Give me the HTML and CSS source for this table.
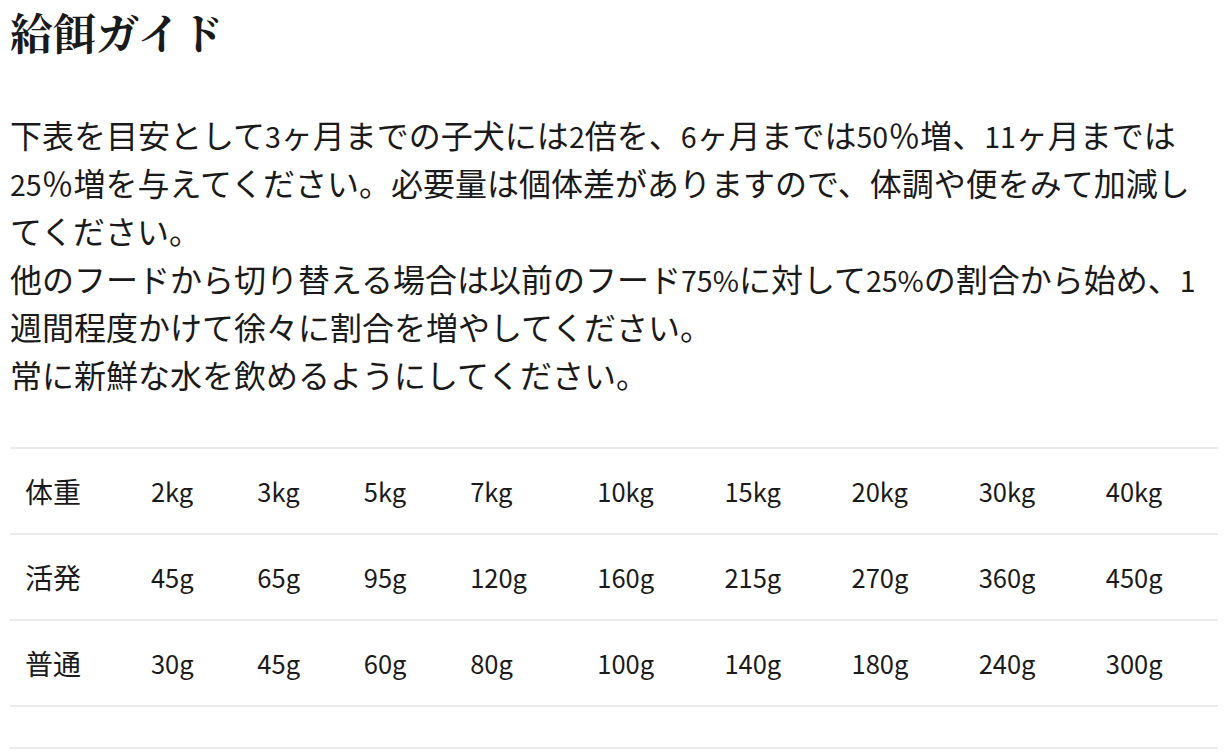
FILE: index.html
```html
<!DOCTYPE html>
<html lang="ja">
<head>
<meta charset="utf-8">
<title>給餌ガイド</title>
<link rel="stylesheet" href="styles.css">
</head>
<body>
<section class="guide">
  <h1 class="guide-title">給餌ガイド</h1>
  <p class="guide-text">下表を目安として<span class="num">3</span>ヶ月までの子犬には<span class="num">2</span>倍を、<span class="num">6</span>ヶ月までは<span class="num">50</span>％増、<span class="num">11</span>ヶ月までは<span class="num">25</span>％増を与えてください。必要量は個体差がありますので、体調や便をみて加減してください。<br>他のフードから切り替える場合は以前のフード<span class="num">75%</span>に対して<span class="num">25%</span>の割合から始め、<span class="num">1</span>週間程度かけて徐々に割合を増やしてください。<br>常に新鮮な水を飲めるようにしてください。</p>
  <table class="feed-table">
    <tbody>
      <tr><th>体重</th><td>2kg</td><td>3kg</td><td>5kg</td><td>7kg</td><td>10kg</td><td>15kg</td><td>20kg</td><td>30kg</td><td>40kg</td></tr>
      <tr><th>活発</th><td>45g</td><td>65g</td><td>95g</td><td>120g</td><td>160g</td><td>215g</td><td>270g</td><td>360g</td><td>450g</td></tr>
      <tr><th>普通</th><td>30g</td><td>45g</td><td>60g</td><td>80g</td><td>100g</td><td>140g</td><td>180g</td><td>240g</td><td>300g</td></tr>
      <tr class="empty-row"><td colspan="10"></td></tr>
    </tbody>
  </table>
</section>
</body>
</html>
```

FILE: styles.css
```css
html, body {
  margin: 0;
  padding: 0;
  background: #ffffff;
}

body {
  padding: 8px 12px 0 10px;
  color: #1a1a1a;
  font-family: "Noto Sans CJK JP", "Noto Sans", sans-serif;
}

.guide {
  width: 1208px;
}

.guide-title {
  margin: 0;
  font-family: "Noto Serif CJK JP", "IPAexMincho", "IPAMincho", "Noto Sans CJK JP", serif;
  font-size: 43px;
  font-weight: 700;
  line-height: 48px;
}

.guide-text {
  margin: 54px 0 0;
  font-size: 32px;
  line-height: 48px;
}

.num {
  font-size: 0.89em;
  line-height: 1;
}

.feed-table {
  margin-top: 49px;
  width: 100%;
  border-collapse: collapse;
  font-size: 28px;
  line-height: 44px;
}

.feed-table th,
.feed-table td {
  padding: 20px 15px;
  text-align: left;
  font-weight: 400;
  vertical-align: middle;
  border-top: 2px solid #ebebeb;
  border-bottom: 2px solid #ebebeb;
  white-space: nowrap;
}

.feed-table td {
  font-size: 25.5px;
}
```
